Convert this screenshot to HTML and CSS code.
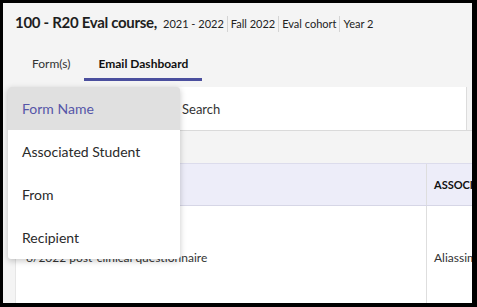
FILE: index.html
```html
<!DOCTYPE html>
<html lang="en">
<head>
    <meta charset="UTF-8">
    <title>Email Dashboard</title>
    <link rel="stylesheet" href="styles.css">
</head>
<body>
    <div class="screen">
        <div class="course-head">
            <span class="course-title">100 - R20 Eval course,</span>
            <span class="meta">2021 - 2022</span>
            <span class="meta">Fall 2022</span>
            <span class="meta">Eval cohort</span>
            <span class="meta last">Year 2</span>
        </div>

        <div class="tabs">
            <div class="tab">Form(s)</div>
            <div class="tab active">Email Dashboard</div>
        </div>

        <div class="content">
            <div class="search-row">
                <div class="search-card">
                    <span class="search-label">Search</span>
                </div>
            </div>
            <div class="gap-band"></div>
            <div class="table">
                <div class="row head">
                    <div class="cell first"></div>
                    <div class="cell">ASSOCIATED STUDENT</div>
                </div>
                <div class="row body">
                    <div class="cell first">6/2022 post-clinical questionnaire</div>
                    <div class="cell">Aliassime, Felix</div>
                </div>
            </div>
        </div>

        <ul class="dropdown">
            <li class="selected">Form Name</li>
            <li>Associated Student</li>
            <li>From</li>
            <li>Recipient</li>
        </ul>
    </div>
</body>
</html>
```

FILE: styles.css
```css
html, body { margin: 0; padding: 0; }
body { font-family: Lato, "Open Sans", sans-serif; color: #222; }

.screen { position: relative; width: 477px; height: 307px; box-sizing: border-box; border: 3px solid #000; border-right-width: 5px; border-bottom-width: 4px; background: #f4f4f4; overflow: hidden; }

.course-head { display: flex; align-items: baseline; padding: 10px 12px 0; height: 22px; }
.course-title { font-size: 15px; font-weight: bold; letter-spacing: -0.3px; margin-right: 3px; color: #1e1e1e; }
.meta { font-size: 11px; padding: 0 3px; border-right: 1px solid #d4d4d4; line-height: 16px; }
.meta.last { border-right: none; }

.tabs { display: flex; padding-left: 15px; margin-top: 13px; }
.tab { padding: 8px 14px 7px; font-size: 12px; color: #333; border-bottom: 3px solid transparent; }
.tab.active { font-weight: bold; color: #111; border-bottom-color: #4b4f9e; }

.content { margin-top: 6px; margin-left: 12px; }
.search-row { border-bottom: 1px solid #dadada; padding-right: 5px; }
.search-card { background: #fff; height: 43px; border-right: 1px solid #dcdcdc; display: flex; align-items: center; padding-left: 167px; }
.search-label { font-size: 13px; color: #333; }
.gap-band { height: 32px; }

.table { width: 560px; background: #fff; border-left: 1px solid #e6e6e6; }
.row { display: flex; }
.row.head { background: #ededf9; height: 41px; border-top: 1px solid #dcdcec; border-bottom: 1px solid #d6d6e6; font-size: 11px; font-weight: bold; color: #111; }
.row.body { height: 98px; font-size: 12px; color: #333; }
.cell { display: flex; align-items: center; padding-left: 7px; white-space: nowrap; }
.cell.first { width: 400px; border-right: 1px solid #dedede; padding-left: 10px; padding-top: 4px; }
.row.body .cell { padding-top: 4px; }

.dropdown { position: absolute; left: 5px; top: 84px; width: 172px; margin: 0; padding: 0; list-style: none; background: #fff; border-radius: 3px; box-shadow: 0 2px 6px rgba(0, 0, 0, 0.22); overflow: hidden; }
.dropdown li { height: 43px; display: flex; align-items: center; padding-left: 14px; font-size: 14px; color: #2a2a2a; }
.dropdown li.selected { background: #e0e0e0; color: #5656a8; }
```
